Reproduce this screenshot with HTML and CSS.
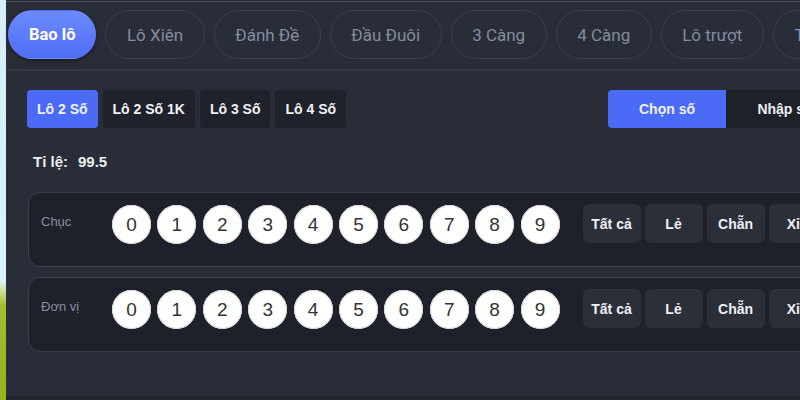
FILE: index.html
```html
<!DOCTYPE html>
<html lang="vi">
<head>
<meta charset="utf-8">
<title>Bao lô</title>
<link rel="stylesheet" href="styles.css">
</head>
<body>
<div class="app">
  <div class="topline"></div>
  <nav class="tabs">
    <button class="pill active">Bao lô</button>
    <button class="pill">Lô Xiên</button>
    <button class="pill">Đánh Đề</button>
    <button class="pill">Đầu Đuôi</button>
    <button class="pill">3 Càng</button>
    <button class="pill">4 Càng</button>
    <button class="pill">Lô trượt</button>
    <button class="pill">Trượt xiên</button>
  </nav>
  <section class="content">
    <div class="subbar">
      <div class="subtabs">
        <button class="sub active">Lô 2 Số</button>
        <button class="sub">Lô 2 Số 1K</button>
        <button class="sub">Lô 3 Số</button>
        <button class="sub">Lô 4 Số</button>
      </div>
      <div class="toggle">
        <button class="tg active">Chọn số</button>
        <button class="tg">Nhập số</button>
      </div>
    </div>
    <div class="rate">Tỉ lệ:<span class="rate-val">99.5</span></div>
    <div class="card">
      <div class="label">Chục</div>
      <div class="balls">
        <span class="ball">0</span><span class="ball">1</span><span class="ball">2</span><span class="ball">3</span><span class="ball">4</span><span class="ball">5</span><span class="ball">6</span><span class="ball">7</span><span class="ball">8</span><span class="ball">9</span>
      </div>
      <div class="actions">
        <button class="act">Tất cả</button><button class="act">Lẻ</button><button class="act">Chẵn</button><button class="act">Xỉu</button>
      </div>
    </div>
    <div class="card">
      <div class="label">Đơn vị</div>
      <div class="balls">
        <span class="ball">0</span><span class="ball">1</span><span class="ball">2</span><span class="ball">3</span><span class="ball">4</span><span class="ball">5</span><span class="ball">6</span><span class="ball">7</span><span class="ball">8</span><span class="ball">9</span>
      </div>
      <div class="actions">
        <button class="act">Tất cả</button><button class="act">Lẻ</button><button class="act">Chẵn</button><button class="act">Xỉu</button>
      </div>
    </div>
  </section>
</div>
</body>
</html>
```

FILE: styles.css
```css
* { box-sizing: border-box; }
html, body { margin: 0; padding: 0; height: 400px; overflow: hidden; }
body {
  width: 800px;
  background: linear-gradient(180deg, #d6eef9 0px, #dcf1fb 280px, #c9df95 292px, #a3bd2c 305px, #98b21c 400px);
  font-family: "Liberation Sans", Arial, sans-serif;
}
button { font: inherit; border: none; cursor: pointer; }
.app {
  margin-left: 6px;
  width: 859px;
  height: 400px;
  background: #292d37;
  border-bottom: 4px solid #22252c;
}
.topline { height: 2px; border-bottom: 1px solid #4e535e; background: #23262e; }
.tabs {
  display: flex;
  gap: 9px;
  padding: 8px 0 0 2px;
  height: 69px;
  border-bottom: 2px solid #343843;
}
.pill {
  flex: none;
  height: 49px;
  padding: 0 20.5px;
  border-radius: 25px;
  border: 1px solid #3b404b;
  background: transparent;
  color: #838ca0;
  font-family: Roboto, "Liberation Sans", sans-serif;
  font-size: 17px;
}
.pill.active {
  padding: 0 20px;
  border-color: transparent;
  background: linear-gradient(180deg, #6c8afb 0%, #4f6ef6 100%);
  color: #fff;
  font-weight: 700;
  font-size: 16.5px;
  box-shadow: 0 2px 4px rgba(0,0,0,0.35);
}
.content { padding: 19px 21px 0 21px; }
.subbar { display: flex; align-items: center; }
.subtabs { display: flex; gap: 5px; }
.sub {
  height: 38px;
  padding: 0 10px;
  border-radius: 4px;
  background: #1f222a;
  color: #f0f2f5;
  font-weight: 700;
  font-size: 14px;
}
.sub.active { background: #4b6bf6; }
.toggle { display: flex; margin-left: auto; }
.tg {
  width: 118px;
  height: 38px;
  background: #1e2128;
  color: #eef0f4;
  font-weight: 700;
  font-size: 14px;
}
.tg.active { background: #4b6bf6; border-radius: 4px 0 0 4px; }
.rate {
  margin: 25px 0 0 6px;
  color: #eceef2;
  font-weight: 700;
  font-size: 15px;
  height: 18px;
}
.rate-val { margin-left: 10px; }
.card {
  display: flex;
  align-items: flex-start;
  margin: 21px 0 10px 1px;
  padding: 12px 13px 22px 12px;
  border: 1px solid #3c414c;
  border-radius: 12px;
  background: #1e2129;
}
.card + .card { margin-top: 0; }
.label {
  width: 71px;
  padding-top: 9px;
  color: #868ea2;
  font-size: 13px;
}
.balls { display: flex; gap: 6.4px; }
.ball {
  width: 39px;
  height: 39px;
  border-radius: 50%;
  background: #fff;
  box-shadow: inset 0 0 0 1px #d8d8d8;
  display: flex;
  align-items: center;
  justify-content: center;
  color: #333;
  font-size: 19px;
}
.actions { display: flex; gap: 4px; margin-left: 23px; }
.act {
  width: 58px;
  height: 39px;
  margin-top: -1px;
  border-radius: 6px;
  background: #2b2f38;
  color: #eef0f4;
  font-weight: 700;
  font-size: 14px;
}
```
